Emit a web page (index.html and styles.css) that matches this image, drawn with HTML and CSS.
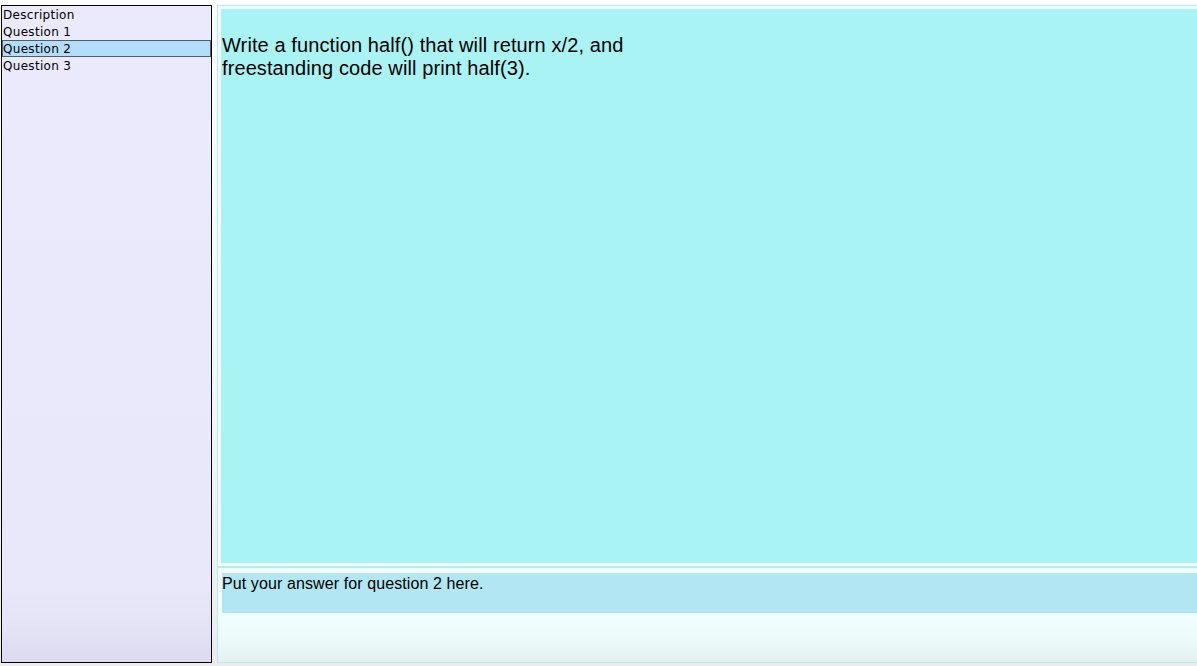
FILE: index.html
```html
<!DOCTYPE html>
<html>
<head>
<meta charset="utf-8">
<title>Questions</title>
<link rel="stylesheet" href="styles.css">
</head>
<body>
<div class="layout">
  <nav class="sidebar">
    <div class="item">Description</div>
    <div class="item">Question 1</div>
    <div class="item selected">Question 2</div>
    <div class="item">Question 3</div>
  </nav>
  <main class="content">
    <section class="question-box">
      <div class="question">
        <p class="question-text">Write a function half() that will return x/2, and freestanding code will print half(3).</p>
      </div>
    </section>
    <section class="answer-box">
      <div class="answer">Put your answer for question 2 here.</div>
    </section>
  </main>
</div>
</body>
</html>
```
FILE: styles.css
```css
html, body {
  margin: 0;
  padding: 0;
  height: 666px;
  overflow: hidden;
}
body {
  background: linear-gradient(#ffffff, #f6f6f8 60%, #ececec);
  font-family: "Liberation Sans", Arial, sans-serif;
  color: #000;
}
.layout {
  display: flex;
  gap: 5px;
  padding: 5px 0 0 1px;
  width: 1210px;
  height: 658px;
}
.sidebar {
  width: 209px;
  flex: none;
  border: 1px solid #000;
  background: linear-gradient(#ebe9fc, #e9e7fa 88%, #e4e2f5 95%, #dcdaee);
  font-family: "DejaVu Sans", "Lucida Grande", sans-serif;
  font-size: 12px;
  letter-spacing: 0.3px;
}
.item {
  height: 15px;
  line-height: 16px;
  border: 1px solid transparent;
  white-space: nowrap;
}
.item.selected {
  background: #b4dcfb;
  border-color: #4f5d6b;
}
.content {
  flex: 1;
  display: flex;
  flex-direction: column;
}
.question-box {
  height: 554px;
  border: 1px solid #b3edf4;
  padding: 3px;
  background: #f0ffff;
}
.question {
  height: 100%;
  background: #aaf3f5;
  padding: 5px 1px 0 1px;
  box-sizing: border-box;
  overflow: hidden;
}
.question-text {
  margin: 20px 0 0 0;
  font-size: 20px;
  line-height: 23px;
  width: 440px;
  letter-spacing: 0.1px;
}
.answer-box {
  flex: 1;
  border: 1px solid #b3edf4;
  padding: 5px 4px 0 4px;
  background: linear-gradient(#f0ffff 50%, #ecfbfa 75%, #e4f2ef);
}
.answer {
  height: 38px;
  background: #b3e6f3;
  font-size: 16px;
  line-height: 18px;
  padding-top: 2px;
  letter-spacing: 0.1px;
}
```
